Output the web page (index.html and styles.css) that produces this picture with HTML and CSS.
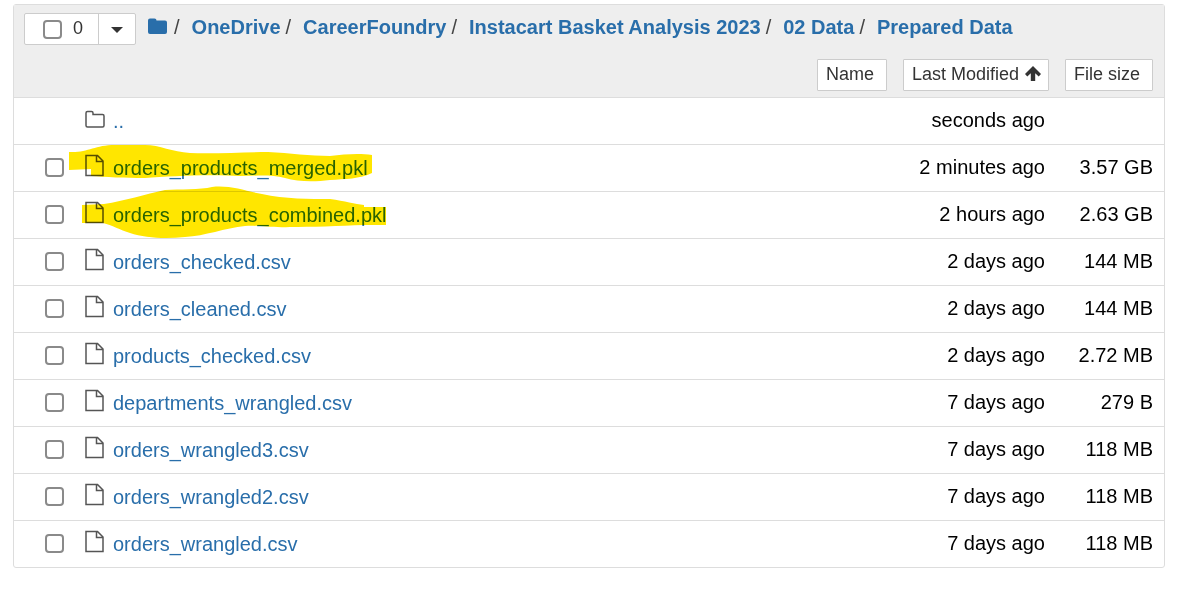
FILE: index.html
```html
<!DOCTYPE html>
<html lang="en">
<head>
<meta charset="utf-8">
<title>Prepared Data</title>
<link rel="stylesheet" href="styles.css">
</head>
<body>
<svg class="sprite" aria-hidden="true">
  <symbol id="file" viewBox="0 0 20 24"><path d="M1 2.500h11.500l5.500 5.500v14.500H1zM11.500 2.500V8.500H18" fill="none" stroke="#555" stroke-width="1.500"/></symbol>
</svg>
<main class="panel">
  <header class="toolbar">
    <div class="top">
      <div class="select-group">
        <label class="select-all"><input class="check" type="checkbox"><span>0</span></label>
        <button class="toggle" type="button" aria-label="Select by type"><span class="caret"></span></button>
      </div>
      <nav class="crumbs" aria-label="Breadcrumb">
        <a class="home" href="#" aria-label="Home"><svg width="20" height="18" viewBox="0 0 20 18"><path d="M0 2.500A2 2 0 0 1 2 .5H6.500A2 2 0 0 1 8.500 2.500H17A2 2 0 0 1 19 4.500v9.500a2 2 0 0 1-2 2H2a2 2 0 0 1-2-2z" fill="#296eaa"/></svg></a>
        <span>/</span><a href="#">OneDrive</a>
        <span>/</span><a href="#">CareerFoundry</a>
        <span>/</span><a href="#">Instacart Basket Analysis 2023</a>
        <span>/</span><a href="#">02 Data</a>
        <span>/</span><a href="#">Prepared Data</a>
      </nav>
    </div>
    <div class="sorts">
      <button class="sort" type="button">Name</button>
      <button class="sort" type="button">Last Modified <svg width="16" height="16" viewBox="0 0 16 16"><path d="M8 0l8 8-2.300 2.500-3.500-3.300V15H5.800V7.200l-3.500 3.300L0 8z" fill="#333"/></svg></button>
      <button class="sort" type="button">File size</button>
    </div>
  </header>
  <div class="list">
    <table class="files">
      <tbody>
        <tr><td class="pick"></td><td class="name"><a href="#"><svg class="folder" viewBox="0 0 20 24"><path d="M1 5A1.500 1.500 0 0 1 2.500 3.500H6.500A1.500 1.500 0 0 1 8 5V6.500H17.500A1.500 1.500 0 0 1 19 8v9.500a1.500 1.500 0 0 1-1.500 1.500h-15A1.500 1.500 0 0 1 1 17.500z" fill="none" stroke="#555" stroke-width="1.500"/></svg><span>..</span></a></td><td class="date">seconds ago</td><td class="size"></td></tr>
        <tr><td class="pick"><input class="check" type="checkbox" aria-label="orders_products_merged.pkl"></td><td class="name"><a href="#"><svg class="file"><use href="#file"/></svg><span>orders_products_merged.pkl</span></a></td><td class="date">2 minutes ago</td><td class="size">3.57 GB</td></tr>
        <tr><td class="pick"><input class="check" type="checkbox" aria-label="orders_products_combined.pkl"></td><td class="name"><a href="#"><svg class="file"><use href="#file"/></svg><span>orders_products_combined.pkl</span></a></td><td class="date">2 hours ago</td><td class="size">2.63 GB</td></tr>
        <tr><td class="pick"><input class="check" type="checkbox" aria-label="orders_checked.csv"></td><td class="name"><a href="#"><svg class="file"><use href="#file"/></svg><span>orders_checked.csv</span></a></td><td class="date">2 days ago</td><td class="size">144 MB</td></tr>
        <tr><td class="pick"><input class="check" type="checkbox" aria-label="orders_cleaned.csv"></td><td class="name"><a href="#"><svg class="file"><use href="#file"/></svg><span>orders_cleaned.csv</span></a></td><td class="date">2 days ago</td><td class="size">144 MB</td></tr>
        <tr><td class="pick"><input class="check" type="checkbox" aria-label="products_checked.csv"></td><td class="name"><a href="#"><svg class="file"><use href="#file"/></svg><span>products_checked.csv</span></a></td><td class="date">2 days ago</td><td class="size">2.72 MB</td></tr>
        <tr><td class="pick"><input class="check" type="checkbox" aria-label="departments_wrangled.csv"></td><td class="name"><a href="#"><svg class="file"><use href="#file"/></svg><span>departments_wrangled.csv</span></a></td><td class="date">7 days ago</td><td class="size">279 B</td></tr>
        <tr><td class="pick"><input class="check" type="checkbox" aria-label="orders_wrangled3.csv"></td><td class="name"><a href="#"><svg class="file"><use href="#file"/></svg><span>orders_wrangled3.csv</span></a></td><td class="date">7 days ago</td><td class="size">118 MB</td></tr>
        <tr><td class="pick"><input class="check" type="checkbox" aria-label="orders_wrangled2.csv"></td><td class="name"><a href="#"><svg class="file"><use href="#file"/></svg><span>orders_wrangled2.csv</span></a></td><td class="date">7 days ago</td><td class="size">118 MB</td></tr>
        <tr><td class="pick"><input class="check" type="checkbox" aria-label="orders_wrangled.csv"></td><td class="name"><a href="#"><svg class="file"><use href="#file"/></svg><span>orders_wrangled.csv</span></a></td><td class="date">7 days ago</td><td class="size">118 MB</td></tr>
      </tbody>
    </table>
    <svg class="marker" width="400" height="150" viewBox="14 98 400 150" aria-hidden="true">
      <path fill="#ffe600" d="M69 152C88 153 94 145 115 145H145C160 145 172 152 190 153C215 154 245 152 268 152C290 153 310 156 330 156C345 154 360 153 372 155V173C360 179 345 179 330 180C315 182 298 182 285 178C270 174 255 176 240 176C210 174 170 176 145 178C125 178 105 177 91 176V169L69 170Z"/>
      <path fill="#ffe600" d="M82 205L104 204C125 201 145 194 165 190C180 189 200 190 212 187C230 185 245 191 262 194C285 199 310 199 330 199C345 201 355 204 364 205V207H386V225H364C340 226 310 227 290 227C270 228 260 225 245 226C225 228 205 236 185 237C165 239 145 238 130 233C120 230 112 225 103 223H82Z"/>
    </svg>
  </div>
</main>
</body>
</html>
```
FILE: styles.css
```css
* { box-sizing: border-box; }
body {
  margin: 0;
  padding: 4px 12px 32px 13px;
  background: #fff;
  color: #000;
  font: 20px/26px "Liberation Sans", Arial, sans-serif;
}
a { color: #296eaa; text-decoration: none; }
.sprite { display: none; }
.panel { border: 1px solid #ddd; border-radius: 3px; }
.toolbar {
  display: flex;
  flex-direction: column;
  gap: 14px;
  padding: 8px 11px 6px 10px;
  background: #eee;
  border-bottom: 1px solid #ddd;
}
.top { display: flex; align-items: flex-start; gap: 12px; }
.select-group { display: flex; height: 32px; background: #fff; border: 1px solid #ccc; border-radius: 2px; font-size: 18px; color: #333; }
.select-all { display: flex; align-items: center; gap: 11px; padding: 0 15px 0 18px; line-height: 28px; }
.select-all span { padding-bottom: 2px; }
.toggle { width: 37px; padding: 0; display: flex; align-items: center; justify-content: center; border: 0; border-left: 1px solid #ccc; background: none; }
.caret { margin-top: 2px; border: 6px solid transparent; border-top-color: #333; border-bottom: 0; }
.check {
  appearance: none;
  display: block;
  width: 19px;
  height: 19px;
  margin: 0;
  border: 2px solid #8a8a8a;
  border-radius: 4px;
  background: #fff;
}
.crumbs { display: flex; padding-top: 1px; white-space: nowrap; }
.crumbs a { font-weight: 700; }
.crumbs span { padding: 0 12px 0 5px; color: #444; }
.crumbs .home { display: flex; padding: 4px 1px 0 0; }
.sorts { display: flex; justify-content: flex-end; gap: 16px; }
.sort {
  display: flex;
  gap: 6px;
  height: 32px;
  padding: 2px 12px 0 8px;
  border: 1px solid #ccc;
  border-radius: 1px;
  background: #fff;
  color: #333;
  font: 18px/24px "Liberation Sans", Arial, sans-serif;
}
.sort svg { margin: 4px -5px 0 0; }
.list { position: relative; }
.files { width: 100%; border-spacing: 0; }
.files td { height: 47px; padding: 0 0 2px; border-bottom: 1px solid #ddd; }
.files tr:last-child td { height: 46px; border-bottom: 0; }
.files .pick { width: 71px; padding: 0 0 2px 31px; }
.name a { display: flex; align-items: center; gap: 8px; }
.name span { padding-top: 2px; }
.file, .folder { flex: none; width: 20px; height: 24px; margin-bottom: 4px; }
.folder { margin-bottom: 0; }
.date, .size { text-align: right; white-space: nowrap; }
.files .size { width: 119px; padding-right: 11px; }
.marker { position: absolute; top: 0; left: 0; mix-blend-mode: multiply; pointer-events: none; }
```
